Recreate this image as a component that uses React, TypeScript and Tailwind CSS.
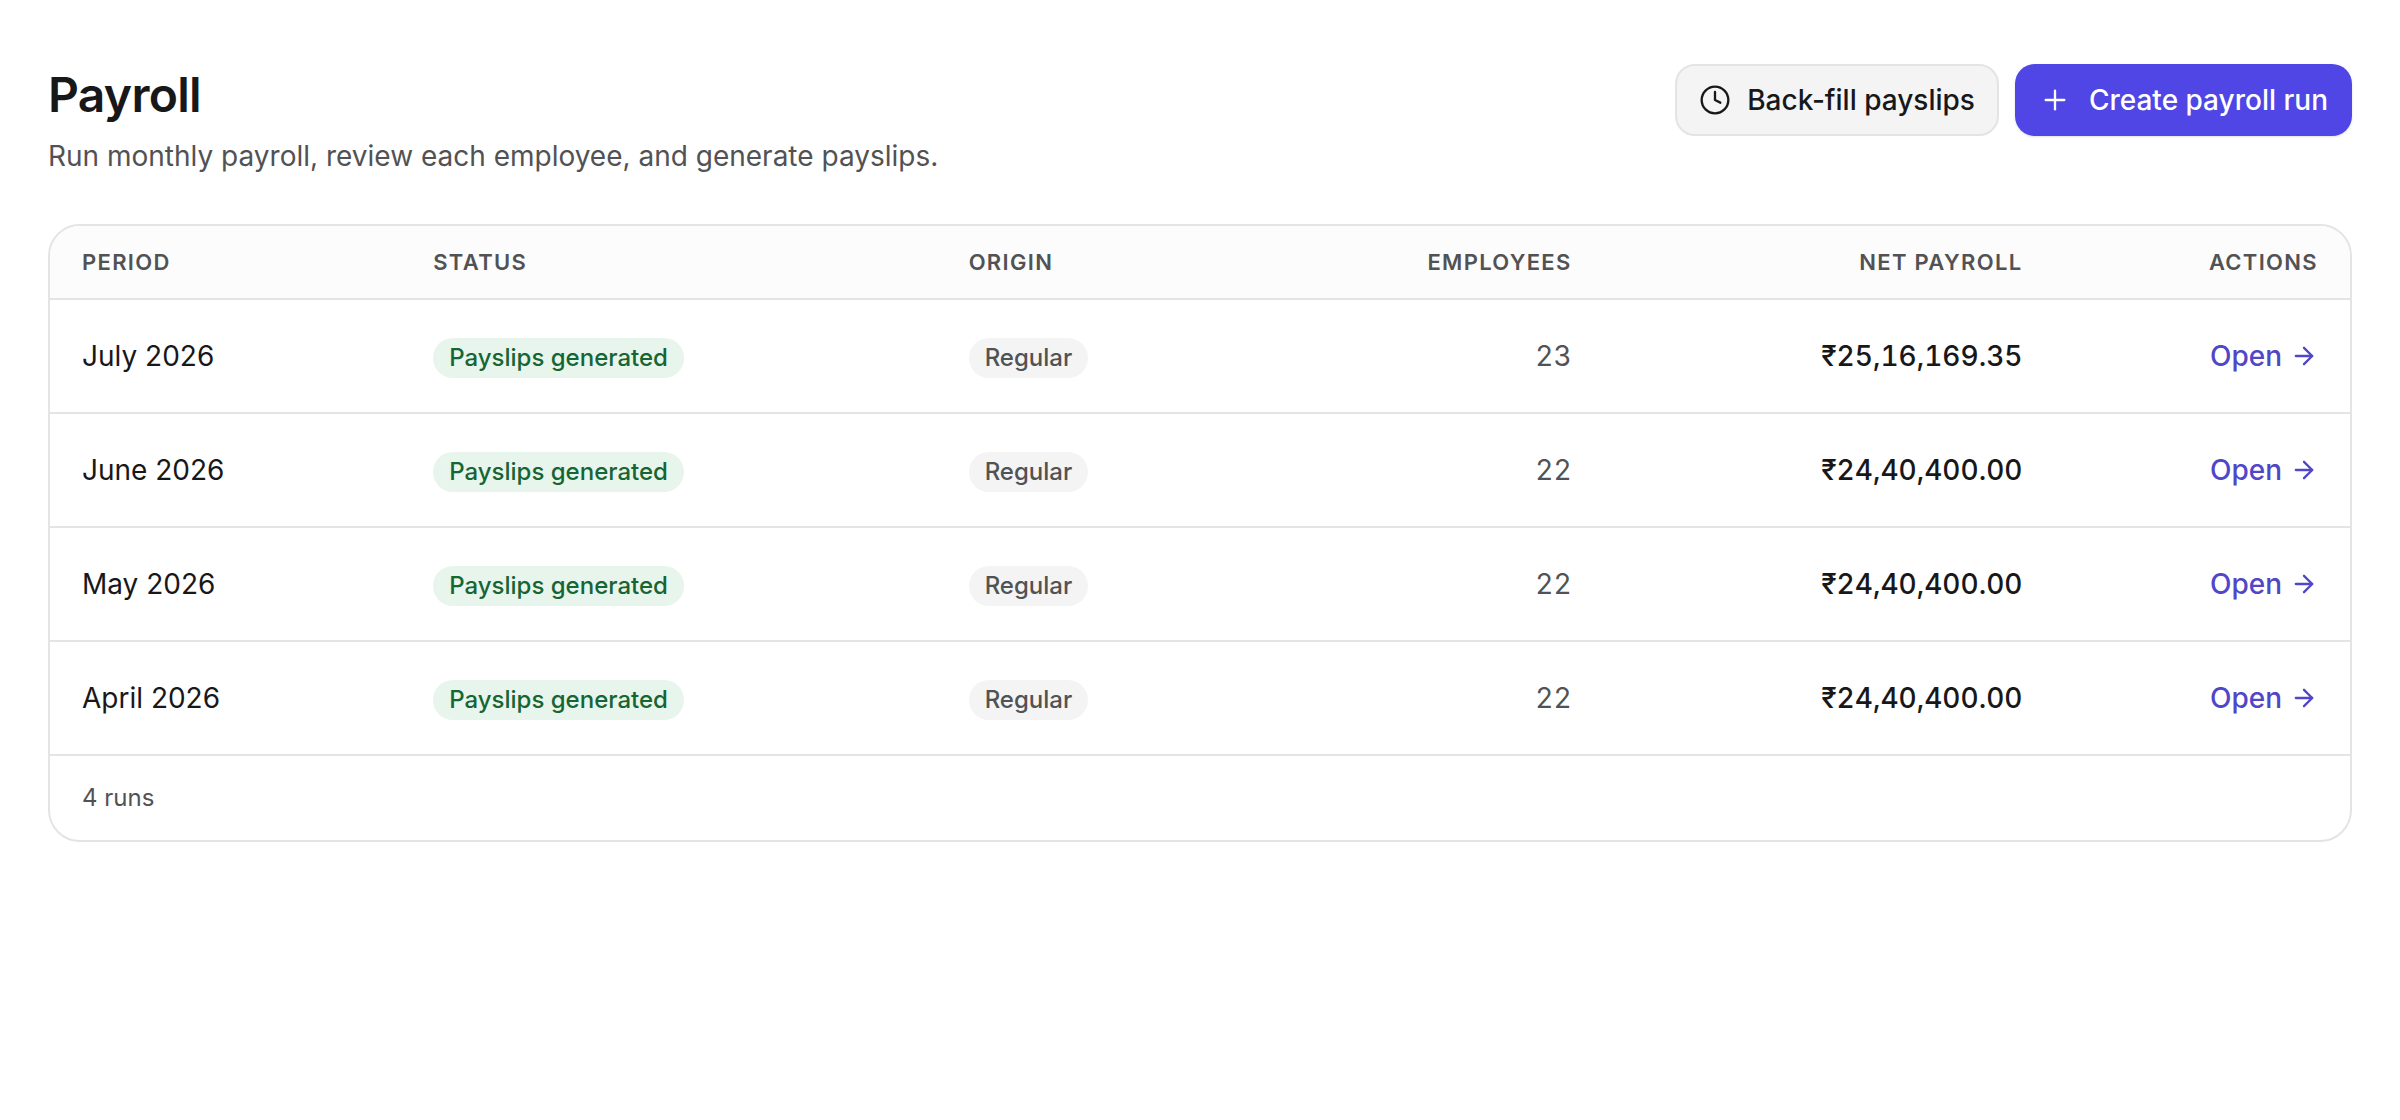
import { ArrowRight, Clock, Plus } from "lucide-react";

type PayrollRun = {
  id: string;
  period: string;
  status: string;
  origin: string;
  employees: number;
  netPayroll: string;
};

const runs: PayrollRun[] = [
  { id: "2026-07", period: "July 2026", status: "Payslips generated", origin: "Regular", employees: 23, netPayroll: "₹25,16,169.35" },
  { id: "2026-06", period: "June 2026", status: "Payslips generated", origin: "Regular", employees: 22, netPayroll: "₹24,40,400.00" },
  { id: "2026-05", period: "May 2026", status: "Payslips generated", origin: "Regular", employees: 22, netPayroll: "₹24,40,400.00" },
  { id: "2026-04", period: "April 2026", status: "Payslips generated", origin: "Regular", employees: 22, netPayroll: "₹24,40,400.00" },
];

const cell = "h-[114px] border-t-2 border-[#e4e4e4] px-8";
const pill = "inline-flex h-10 items-center rounded-full px-4 text-2xl font-medium";

export default function App() {
  return (
    <main className="min-h-screen bg-white px-12 pt-16 font-['Inter',sans-serif] text-[#18181a]">
      {/* Header */}
      <header className="flex items-start justify-between gap-6">
        <div>
          <h1 className="text-5xl leading-[62px] font-semibold tracking-[-0.015em]">Payroll</h1>
          <p className="mt-2.5 text-[28px] leading-10 text-[#525254]">
            Run monthly payroll, review each employee, and generate payslips.
          </p>
        </div>
        <div className="flex gap-4">
          <button type="button" className="flex h-18 items-center gap-4 rounded-[20px] border-2 border-[#e4e4e4] bg-[#f4f4f4] px-[22px] text-[28px] font-medium">
            <Clock size={32} strokeWidth={1.75} />
            Back-fill payslips
          </button>
          <button type="button" className="flex h-18 items-center gap-[18px] rounded-[20px] bg-[#4f46e5] px-6 text-[28px] font-medium text-white shadow">
            <Plus size={32} strokeWidth={1.75} />
            Create payroll run
          </button>
        </div>
      </header>

      {/* Runs */}
      <section className="mt-12 overflow-hidden rounded-[32px] border-2 border-[#e4e4e4]">
        <table className="w-full table-fixed border-separate border-spacing-0 text-left text-[28px]">
          <colgroup>
            <col className="w-[15.27%]" />
            <col className="w-[23.28%]" />
            <col className="w-[15%]" />
            <col className="w-[14%]" />
            <col className="w-[19.6%]" />
            <col />
          </colgroup>
          <thead className="bg-[#fcfcfc] text-[22px] tracking-[0.06em] text-[#525254] uppercase">
            <tr>
              <th className="h-18 px-8 font-semibold">Period</th>
              <th className="px-8 font-semibold">Status</th>
              <th className="px-8 font-semibold">Origin</th>
              <th className="px-8 text-right font-semibold">Employees</th>
              <th className="px-8 text-right font-semibold">Net payroll</th>
              <th className="px-8 text-right font-semibold">Actions</th>
            </tr>
          </thead>
          <tbody>
            {runs.map((run) => (
              <tr key={run.id}>
                <td className={cell}>{run.period}</td>
                <td className={cell}>
                  <span className={`${pill} bg-[#e8f5ec] text-[#166534]`}>{run.status}</span>
                </td>
                <td className={cell}>
                  <span className={`${pill} bg-[#f4f4f4] text-[#525254]`}>{run.origin}</span>
                </td>
                <td className={`${cell} text-right text-[#525254] tabular-nums`}>{run.employees}</td>
                <td className={`${cell} text-right font-medium tabular-nums`}>{run.netPayroll}</td>
                <td className={`${cell} text-right`}>
                  <a href={`#${run.id}`} className="inline-flex items-center gap-2 font-medium text-[#5046c8]">
                    Open
                    <ArrowRight size={28} strokeWidth={2} />
                  </a>
                </td>
              </tr>
            ))}
          </tbody>
        </table>
        <footer className="border-t-2 border-[#e4e4e4] px-8 py-6 text-2xl leading-9 text-[#525254]">{runs.length} runs</footer>
      </section>
    </main>
  );
}
